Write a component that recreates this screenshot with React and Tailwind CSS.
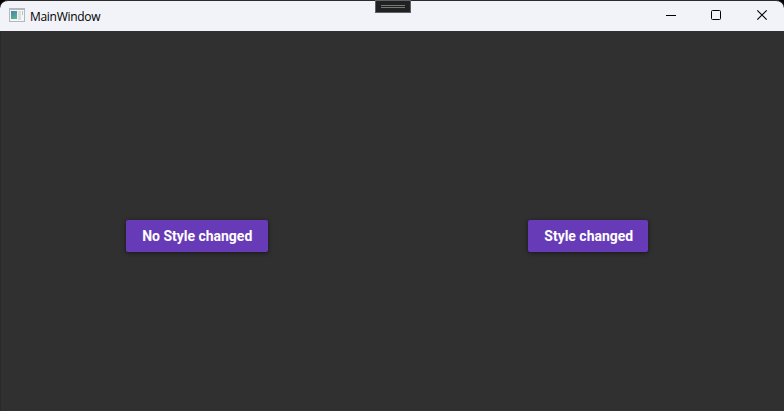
function AppIcon() {
  return (
    <svg width="16" height="14" viewBox="0 0 16 14" shapeRendering="crispEdges" className="-mt-0.5 shrink-0">
      <defs>
        <linearGradient id="pane" x1="0" y1="0" x2="0.5" y2="1">
          <stop offset="0" stopColor="#4a80b8" />
          <stop offset="1" stopColor="#5cb088" />
        </linearGradient>
      </defs>
      <rect width="16" height="14" fill="#b4b7bb" />
      <rect x="1" y="2" width="14" height="11" fill="#f4f5f7" />
      <rect x="2" y="3" width="6" height="8" fill="url(#pane)" />
      <rect x="9" y="3" width="3" height="9" fill="#dcdee1" />
      <rect x="13" y="3" width="1" height="4" fill="#a9cbbd" />
    </svg>
  );
}

function TitleBar() {
  return (
    <header className="relative flex h-[31px] shrink-0 items-center rounded-t-[8px] border-t border-[#2b2b2d] bg-[#f1f3f9]">
      <div className="flex items-center gap-[5px] pl-[9px]">
        <AppIcon />
        <span className="pt-px text-[12px] leading-[16px] tracking-[-0.3px] text-black font-['Open_Sans',sans-serif]">MainWindow</span>
      </div>
      <div className="ml-auto flex h-full text-black">
        <svg width="46" height="30" fill="none" stroke="currentColor">
          <path d="M18 14.5h10" />
        </svg>
        <svg width="45" height="30" fill="none" stroke="currentColor">
          <rect x="17.5" y="9.5" width="9" height="9" rx="1" />
        </svg>
        <svg width="45" height="30" fill="none" stroke="currentColor" strokeWidth="1.15">
          <path d="M18.3 9.3l9.4 9.4M27.7 9.3L18.3 18.7" />
        </svg>
      </div>
      <div className="absolute -top-px left-[375px] flex h-[13px] w-9 flex-col items-center gap-px border border-[#606164] bg-[#202120] pt-1">
        <div className="h-px w-6 bg-[#777]" />
        <div className="h-px w-6 bg-[#777]" />
      </div>
    </header>
  );
}

function RaisedButton({ className, children }) {
  return (
    <button
      className={`h-8 whitespace-nowrap rounded-[2px] bg-[#673ab7] pl-px text-center text-[14px] font-bold leading-8 tracking-[-0.02px] text-white shadow-[0_1px_4px_rgba(0,0,0,0.55)] font-[Roboto,sans-serif] ${className}`}
    >
      {children}
    </button>
  );
}

export default function App() {
  return (
    <div className="flex h-[411px] w-[784px] flex-col overflow-hidden bg-black">
      <TitleBar />
      <main className="grid flex-1 grid-cols-2 items-center border-l border-[#292929] bg-[#303030] pt-[30px]">
        <div className="flex justify-center">
          <RaisedButton className="w-[142px]">No Style changed</RaisedButton>
        </div>
        <div className="flex justify-center">
          <RaisedButton className="w-[120px]">Style changed</RaisedButton>
        </div>
      </main>
    </div>
  );
}
